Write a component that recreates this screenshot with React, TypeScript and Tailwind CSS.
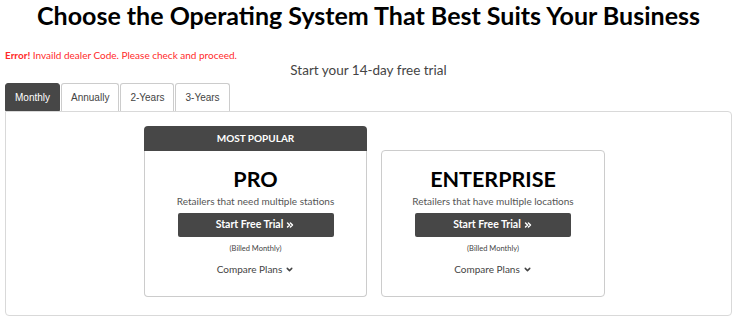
import { ChevronsRight, ChevronDown } from 'lucide-react';

const tabs = ['Monthly', 'Annually', '2-Years', '3-Years'];

const PlanBody = ({ name, blurb }: { name: string; blurb: string }) => (
  <div className="flex flex-col items-center pt-[16px]">
    <h3 className="text-[21.5px] leading-[24px] font-bold text-black">{name}</h3>
    <p className="mt-[3px] text-[10px] leading-[14px] text-[#555]">{blurb}</p>
    <button className="mt-[5px] w-[156px] h-[24px] rounded-[2px] bg-[#474747] text-white text-[10.5px] font-bold flex items-center justify-center gap-[2px]">
      Start Free Trial
      <ChevronsRight size={10} strokeWidth={3.5} />
    </button>
    <p className="mt-[7px] text-[7.5px] leading-[9px] text-[#444]">(Billed Monthly)</p>
    <p className="mt-[9px] text-[10px] leading-[14px] text-[#444] flex items-center gap-[3px]">
      Compare Plans
      <ChevronDown size={9} strokeWidth={4} />
    </p>
  </div>
);

export default function App() {
  return (
    <div className="w-[737px] h-[321px] bg-white overflow-hidden font-['Lato','Liberation_Sans',sans-serif]">
      {/* Heading */}
      <h1 className="text-center text-[25px] leading-[30px] font-bold text-black">
        Choose the Operating System That Best Suits Your Business
      </h1>

      <p className="mt-[19px] pl-[5px] text-[10px] leading-[12px] text-[#ff2a2a]">
        <span className="font-bold">Error!</span> Invaild dealer Code. Please check and proceed.
      </p>
      <p className="mt-[1px] text-center text-[13.5px] leading-[16px] text-[#444]">Start your 14-day free trial</p>

      {/* Tabs */}
      <div className="mt-[5px] mx-[5px] flex gap-[1px] font-['Liberation_Sans',sans-serif] text-[10px]">
        {tabs.map((t, i) => (
          <div
            key={t}
            className={
              i === 0
                ? 'h-[28px] px-[9px] flex items-center rounded-t-[3px] bg-[#474747] text-white border border-[#474747]'
                : 'h-[28px] px-[9px] flex items-center rounded-t-[3px] bg-white text-[#444] border border-b-0 border-[#ccc]'
            }
          >
            {t}
          </div>
        ))}
      </div>

      {/* Panel */}
      <div className="mx-[5px] h-[205px] border border-[#d9d9d9] rounded-b-[4px] rounded-tr-[4px]">
        <div className="flex items-end gap-[14px] pl-[138px] pt-[14px]">
          <div className="w-[223px] flex flex-col">
            <div className="h-[25px] rounded-t-[4px] bg-[#474747] flex items-center justify-center text-white text-[10px] font-bold">
              MOST POPULAR
            </div>
            <div className="h-[146px] border border-t-0 border-[#ccc] rounded-b-[4px]">
              <PlanBody name="PRO" blurb="Retailers that need multiple stations" />
            </div>
          </div>
          <div className="w-[224px] h-[147px] border border-[#ccc] rounded-[4px]">
            <PlanBody name="ENTERPRISE" blurb="Retailers that have multiple locations" />
          </div>
        </div>
      </div>
    </div>
  );
}
